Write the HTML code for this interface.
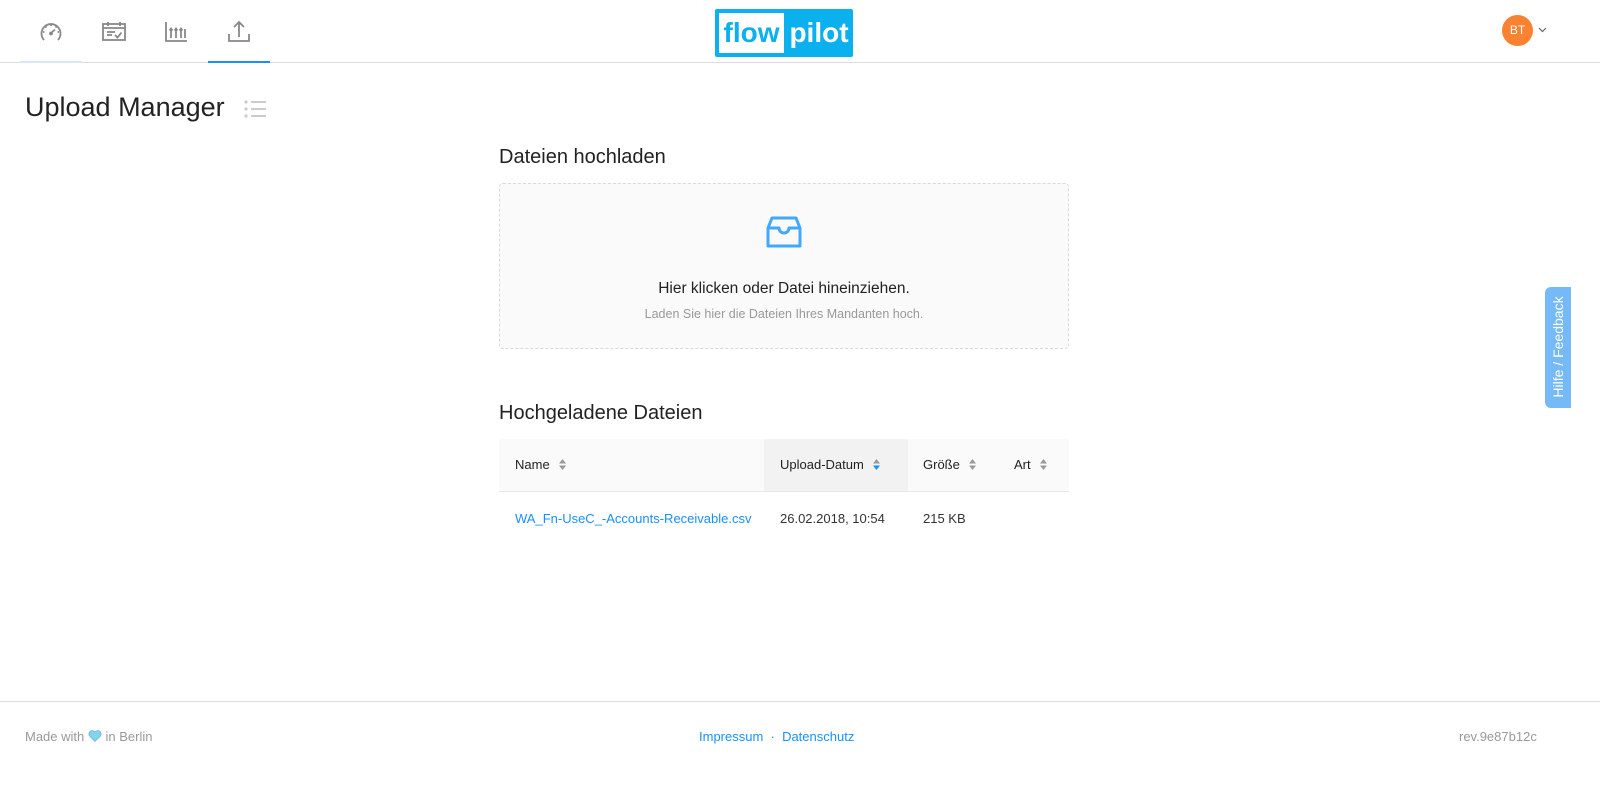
<!DOCTYPE html>
<html><head><meta charset="utf-8"><style>
*{box-sizing:border-box;margin:0;padding:0}
body{width:1600px;height:785px;background:#fff;font-family:"Liberation Sans",sans-serif;position:relative;overflow:hidden;color:#222}
.hdr{position:absolute;left:0;top:0;width:1600px;height:63px;border-bottom:1px solid #ddd}
.tab{position:absolute;top:0;width:62px;height:62px}
.tab svg{position:absolute;left:19px;top:20px}
.u{position:absolute;bottom:-1px;left:0;width:62px;height:2px}
.logo{position:absolute;left:715px;top:9px;width:138px;height:48px;background:#0bb0ee;border-radius:2px}
.logo .f{position:absolute;left:4px;top:4px;width:65px;height:40px;background:#fff;color:#0bb0ee;font:bold 28px "Liberation Sans",sans-serif;text-align:center;line-height:39px}
.logo .p{position:absolute;left:74px;top:4px;width:60px;text-align:center;color:#fff;font:bold 28px "Liberation Sans",sans-serif;line-height:39px}
.av{position:absolute;left:1502px;top:15px;width:31px;height:31px;border-radius:50%;background:#fa8231;color:#fff;font-size:12px;text-align:center;line-height:31px}
h1{position:absolute;left:25px;top:92px;font-weight:normal;font-size:27px;color:#222}
h2{position:absolute;left:499px;font-weight:normal;font-size:20px;color:#222}
.drop{position:absolute;left:499px;top:183px;width:570px;height:166px;border:1px dashed #d9d9d9;border-radius:4px;background:#fafafa;text-align:center}
.t1{position:absolute;top:96px;width:100%;font-size:15.5px;color:#222}
.t2{position:absolute;top:123px;width:100%;font-size:12.5px;color:#999}
.th{position:absolute;top:439px;left:499px;width:570px;height:53px;background:#fafafa;border-bottom:1px solid #e8e8e8;font-size:13px}
.th div{position:absolute;top:0;height:52px;line-height:52px}
.s{display:inline-block;vertical-align:middle;margin-left:9px;width:7px;height:11px;position:relative;top:-1px}
.td{position:absolute;top:511px;font-size:13px;color:#333}
.fb{position:absolute;left:1545px;top:287px;width:26px;height:121px;background:#75b9f6;border-radius:6px 0 0 6px}
.fb span{position:absolute;left:13px;top:60px;transform:translate(-50%,-50%) rotate(-90deg);white-space:nowrap;color:#fff;font-size:14px}
.ft{position:absolute;top:701px;left:0;width:1600px;border-top:1px solid #ddd}
.fx{position:absolute;top:729px;font-size:13px;color:#999}
</style></head><body>
<div class="hdr">
 <div class="tab" style="left:20px"><svg width="24" height="24" viewBox="0 0 24 24" fill="none" stroke="#888" stroke-width="1.8"><path d="M5 20A9.5 9.5 0 1 1 19 20"/><path d="M12 13l4-3.5" /><circle cx="12" cy="13.5" r="1" fill="#888"/><path d="M12 4.5v1.5M4 12h1.5M18.5 12H20M6.5 6.5l1 1M17.5 6.5l-1 1"/></svg><div class="u" style="background:#d6e8f8"></div></div>
 <div class="tab" style="left:82px"><svg width="26" height="24" viewBox="0 0 26 24" fill="none" stroke="#888" stroke-width="1.8"><rect x="2" y="4" width="22" height="16"/><path d="M2 8h22M7 2v4M19 2v4M6 12h8M6 15h5M14 15l2.5 2.5 4-5"/></svg></div>
 <div class="tab" style="left:145px"><svg width="24" height="24" viewBox="0 0 24 24" fill="none" stroke="#888" stroke-width="1.8"><path d="M2 2v19h21M7 18v-9M12 18v-9M17 18v-9M21 18v-9"/><path d="M5.5 10.5l1.5-2 1.5 2M10.5 10.5l1.5-2 1.5 2M15.5 10.5l1.5-2 1.5 2"/></svg></div>
 <div class="tab" style="left:208px"><svg width="24" height="24" viewBox="0 0 24 24" fill="none" stroke="#888" stroke-width="1.8"><path d="M2 14v7h20v-7M12 17V2M7 7l5-5 5 5"/></svg><div class="u" style="background:#1890ff"></div></div>
 <div class="logo"><div class="f">flow</div><div class="p">pilot</div></div>
 <div class="av">BT</div>
 <svg style="position:absolute;left:1538px;top:27px" width="9" height="6" viewBox="0 0 9 6" fill="none" stroke="#666" stroke-width="1.2"><path d="M1 1l3.5 3.5L8 1"/></svg>
</div>
<h1>Upload Manager</h1>
<svg style="position:absolute;left:244px;top:99px" width="22" height="20" viewBox="0 0 22 20" fill="#ccc"><circle cx="2" cy="3" r="1.6"/><circle cx="2" cy="10" r="1.6"/><circle cx="2" cy="17" r="1.6"/><rect x="7" y="2" width="15" height="2"/><rect x="7" y="9" width="15" height="2"/><rect x="7" y="16" width="15" height="2"/></svg>
<h2 style="top:146px">Dateien hochladen</h2>
<div class="drop">
 <svg style="position:absolute;left:266px;top:30px" width="36" height="36" viewBox="0 0 36 36" fill="none" stroke="#40a9ff" stroke-width="3" stroke-linejoin="round"><path d="M6 4h24l4 10v18H2V14z"/><path d="M2 14h11a5 5 0 0 0 10 0h11"/></svg>
 <div class="t1">Hier klicken oder Datei hineinziehen.</div>
 <div class="t2">Laden Sie hier die Dateien Ihres Mandanten hoch.</div>
</div>
<h2 style="top:402px">Hochgeladene Dateien</h2>
<div class="th">
 <div style="left:16px">Name<svg class="s" viewBox="0 0 7 11"><path d="M0 4.5L3.5 0 7 4.5zM0 6.5L3.5 11 7 6.5z" fill="#999"/></svg></div>
 <div style="left:265px;width:144px;background:#f2f2f2;padding-left:16px">Upload-Datum<svg class="s" viewBox="0 0 7 11"><path d="M0 4.5L3.5 0 7 4.5z" fill="#999"/><path d="M0 6.5L3.5 11 7 6.5z" fill="#1890ff"/></svg></div>
 <div style="left:424px">Größe<svg class="s" viewBox="0 0 7 11"><path d="M0 4.5L3.5 0 7 4.5zM0 6.5L3.5 11 7 6.5z" fill="#999"/></svg></div>
 <div style="left:515px">Art<svg class="s" viewBox="0 0 7 11"><path d="M0 4.5L3.5 0 7 4.5zM0 6.5L3.5 11 7 6.5z" fill="#999"/></svg></div>
</div>
<div class="td" style="left:515px;color:#1890ff">WA_Fn-UseC_-Accounts-Receivable.csv</div>
<div class="td" style="left:780px">26.02.2018, 10:54</div>
<div class="td" style="left:923px">215 KB</div>
<div class="fb"><span>Hilfe / Feedback</span></div>
<div class="ft"></div>
<div class="fx" style="left:25px">Made with <svg width="14" height="12" viewBox="0 0 14 12" style="vertical-align:-1px"><path d="M7 11.5L1.5 6A3.2 3.2 0 0 1 7 2a3.2 3.2 0 0 1 5.5 4z" fill="#7fd3f4" stroke="#6ab" stroke-width=".6"/></svg> in Berlin</div>
<div class="fx" style="left:699px;color:#1890ff">Impressum &nbsp;·&nbsp; Datenschutz</div>
<div class="fx" style="left:1459px">rev.9e87b12c</div>
</body></html>
